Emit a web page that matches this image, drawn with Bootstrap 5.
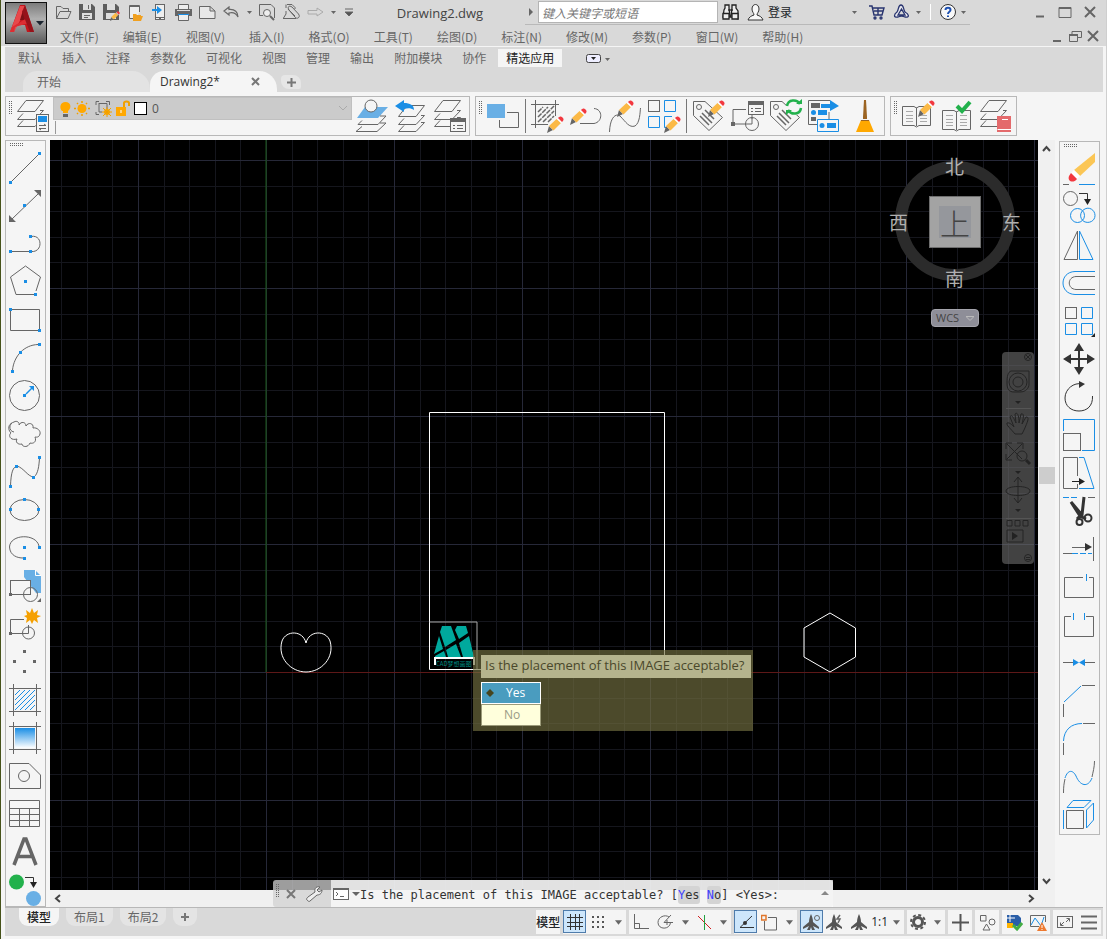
<!DOCTYPE html>
<html lang="zh-CN">
<head>
<meta charset="utf-8">
<meta name="viewport" content="width=device-width, initial-scale=1">
<title>Drawing2.dwg</title>
<link href="https://cdn.jsdelivr.net/npm/bootstrap@5.3.0/dist/css/bootstrap.min.css" rel="stylesheet">
<script src="https://cdn.jsdelivr.net/npm/bootstrap@5.3.0/dist/js/bootstrap.bundle.min.js"></script>
<style>
:root{--ink:#666;--chrome:#d9d9d9;--paper:#f5f5f5;--blue:#1a8ee5;--line:#b8b8b8}
body{font:12px/16px "Open Sans","Noto Sans CJK SC",sans-serif;background:var(--paper);color:var(--ink);border-left:1px solid #46521a;border-right:1px solid #cfcfcf}
button{border:0;background:none;padding:0;color:inherit;font:inherit}
svg{display:block;fill:none;stroke:var(--ink)}
a{color:inherit;text-decoration:none}
.zh{font-family:"Noto Sans CJK SC",sans-serif}
.b{stroke:var(--blue)} .bf{fill:var(--blue);stroke:none} .kf{fill:var(--ink);stroke:none} .lb{fill:#69afe5;stroke:none}
/* title area */
.titlebar{background:var(--chrome);height:46px}
.app-btn{width:42px;height:42px;margin:2px 0 0 4px;border:1px solid #111;background:linear-gradient(#7c7c7c,#b0b0b0 40%,#5c5c5c)}
.row-a{height:25px}.row-b{height:21px}
.qa{width:24px;height:24px}.qa-caret{width:12px;height:24px}
.qa svg,.qa-caret svg{margin:auto}
.doc-title{font-size:13px;color:#444}
.info{width:445px;height:25px;border-bottom:1px solid #b9b9b9}
.search{width:180px;height:22px;border:1px solid #b4b4b4;border-radius:0;background:#fff;font-style:italic;font-size:12px;padding:0 3px;color:#666;outline:0}
.search::placeholder{color:#777;opacity:1}
.wins{width:136px}
.win{width:25px;height:24px}.win2{width:18px;height:20px}
.menus{gap:24px;padding-left:13px;padding-top:2px}
/* ribbon */
.ribbon{background:var(--chrome);height:45px;margin:1px 3px 0 4px}
.rtabs{gap:4px;height:24px;padding-left:5px}
.rtabs a{padding:0 8px;height:18px;line-height:17px;margin-top:2px}
.rtabs a.on{background:var(--paper);color:#222}
.ftabs{height:21px}
.ftab{height:21px;border-radius:14px 18px 0 0}
.ftab-start{width:127px;margin-left:18px;background:#e3e3e3;padding-left:14px}
.ftab-doc{width:127px;background:var(--paper);color:#333;padding:0 17px 0 10px;font-size:12px}
.ftab-plus{width:20px;height:14px;background:#e6e6e6;border-radius:4px 8px 2px 8px;margin:4px 0 0 4px}
/* tool strips */
.tools-top{gap:5px;padding:4px 0 4px 4px}
.strip{border:1px solid var(--line);height:40px}
.grip-v{width:5px;height:13px;margin:4px 1px 0 2px;background:conic-gradient(#666 25%,transparent 0) 0 0/2px 2px}
.grip-h{width:14px;height:4px;margin:2px 0 2px 3px;background:conic-gradient(#666 25%,transparent 0) 0 0/2px 2px}
.tool{display:block;width:39px;height:38px;flex:none}
.split{width:1px;height:34px;margin:2px;background:#777}
.layerbox{width:299px;height:38px}
.layerrow{height:23px;background:#cbcbcb;border:1px solid #c0c0c0}
.layerrow select{appearance:none;border:0;background:none;color:#555;font-size:12px;padding:0 5px;outline:0}
.vrule{border-left:1px solid #999;height:13px;margin:1px 0 0 2px}
/* work area */
.work{min-height:0;padding-left:4px}
.side{width:41px;border:1px solid var(--line);overflow:hidden}
.side-r{align-self:flex-start;margin:1px 6px 0 4px}
.view{margin-left:4px}
.canvas{background:#000;min-height:0}
.vscroll{width:17px;background:#f0f0f0;padding:5px 0}
.thumb{width:16px;height:17px;background:#cdcdcd}
.hscroll{height:17px;background:#f0f0f0;padding:0 4px}
.cube{right:18px;top:18px;width:130px;height:130px;color:#b0b0b0;font-size:19px;line-height:20px}
.cube b{font-weight:400;position:absolute}
.cube .n{left:55px;top:-2px}.cube .s{left:55px;bottom:0}.cube .w{left:-1px;top:54px}.cube .e{right:-1px;top:54px}
.cube-face{left:39px;top:38px;width:52px;height:52px;background:#a3a3a3;border:1px solid #6e6e6e}
.cube-face span{display:block;width:32px;height:32px;margin:9px;background:#95979c;color:#444;font:300 30px/32px "Noto Sans CJK SC",sans-serif;text-align:center}
.wcs{right:59px;top:169px;width:48px;height:18px;background:#8e8e98;border:1px solid #a5a5ad;border-radius:4px;color:#444;line-height:14px;font-size:11px}
.navbox{right:4px;top:212px;width:32px;height:212px;background:rgba(110,110,110,.6);border-radius:4px}
.prompt{left:423px;top:510px;width:280px;height:81px;background:rgba(115,113,65,.66);padding:5px 2px 0 8px;color:#fff}
.prompt-q{height:23px;line-height:20px;font-size:13px;background:#b5b48d;color:#4a482b;padding-left:4px;margin-bottom:4px}
.opt{display:flex;align-items:center;width:60px;height:22px;line-height:18px;border:1px solid #fff}
.opt-y{background:#4a9cbf;color:#fff}
.opt-n{background:#ffffdc;color:#9b9b86;border-color:#9c9b7a;padding-left:22px}
.cmd{left:223px;bottom:0;width:560px;height:27px;z-index:2;border-radius:3px;background:rgba(210,210,210,.75)}
.cmd-in{background:rgba(255,255,255,.7);font:12px/30px "DejaVu Sans Mono","Liberation Mono",monospace;color:#333;padding-left:1px;white-space:pre}
.kw{background:#d4d4d4;border-radius:3px;padding:2px 0}
.kw i{font-style:normal;color:#4040ff}
/* status */
.status{border-top:1px solid var(--line);height:29px;background:var(--chrome);margin:0 3px 3px 4px}
.tabline{padding-left:14px}
.ltab{height:18px;line-height:17px;background:#e4e4e4;border-radius:0 0 9px 9px;text-align:center;margin-right:3px}
.ltab.on{background:var(--paper);color:#222;font-weight:500}
.sgroups{gap:3px;padding:2px 2px 0 0}
.sgrp{background:#f4f4f4;height:24px}
.sb{width:24px;height:24px}.sb-s{width:22px;height:24px}
.sb.act{width:23px;height:23px;background:#cde6fb;border:1px solid #4f7cab}
.sc{width:16px;height:24px}
.sb svg,.sb-s svg,.sc svg{margin:auto}
</style>
</head>
<body class="d-flex flex-column vh-100 overflow-hidden m-0">
<svg width="0" height="0" class="position-absolute" aria-hidden="true">
<symbol id="pencil" viewBox="0 0 17 17"><path d="M0 17 2 10 6 14Z" fill="#666" stroke="none"/><path d="M2 10 9.500 3 14 7 6.500 14.500Z" fill="#fbb946" stroke="none"/><path d="M10 3 11 2 15 6 14 7Z" fill="#fff" stroke="none"/><path d="M11 2C13 0 14 0 15.500 1.500S17 4 15 6Z" fill="#f2383f" stroke="none"/></symbol>
<symbol id="caret" viewBox="0 0 8 5"><path d="M0 0H8L4 5Z" fill="#666" stroke="none"/></symbol>
<symbol id="caret-s" viewBox="0 0 5 3"><path d="M0 0H5L2.500 3Z" fill="#666" stroke="none"/></symbol>
<symbol id="stack" viewBox="0 0 30 28"><path d="M9 .5H26.500L18 11.500H.5ZM23 10.500H26.500L18 19.500H.5L6 13.500M23 17.500H26.500L18 26.500H.5L6 20.500"/></symbol>
<symbol id="tag" viewBox="0 0 32 32"><path d="M1.500 1.500H13L30.500 17.500 17 30.500 1.500 15.500Z"/><circle cx="7" cy="7" r="2.500"/><path d="M13 10 22 19M10 13 20 23M8 16 17 25" stroke-width="1.500"/></symbol>
<symbol id="anno" viewBox="0 0 16 16"><path d="M8 0C9 2 10 5 10 8L16 13V15L10 12 12 16H9L8 13 7 16H4L6 12 0 15V13L6 8C6 5 7 2 8 0Z" fill="#555" stroke="none"/></symbol>
<symbol id="book" viewBox="0 0 30 24"><path d="M14.500 3.500V22M.5 2.500H12L14.500 4 17 2.500H28.500V21.500H17L14.500 23 12 21.500H.5Z"/><path d="M4 7.500H11M4 11.500H11M4 14.500H11M4 17.500H11M18 7.500H25M18 11.500H25M18 14.500H25M18 17.500H25" stroke="#aaa"/></symbol>
</svg>

<header class="titlebar d-flex">
  <button class="app-btn d-flex align-items-center" aria-label="应用程序菜单"><svg width="40" height="40" viewBox="0 0 40 40"><g stroke="none"><path d="M4 29 14 2H19L28 29H21L19 22H10L8 29Z" fill="#c3151c"/><path d="M14 3H19L17 12 8 29H4Z" fill="#e8484b"/><path d="M17 7 14 17H19Z" fill="#7d1015"/><path d="M4 29 6 24 21 15 23 20 9 24 8 29Z" fill="#dd2d32"/><path d="M19 2 28 29H24L16 9Z" fill="#96121a"/><path d="M30 18H38L34 22.500Z" fill="#1c2530"/></g></svg></button>
  <div class="flex-grow-1">
    <div class="row-a d-flex">
      <div class="d-flex ps-1" role="toolbar" aria-label="快速访问">
        <button class="qa" aria-label="打开"><svg width="17" height="15" viewBox="0 0 17 15"><path d="M1.500 13.500V1.500H6L8 3.500H13.500V6M1.500 13.500 5 6.500H16L13 13.500Z"/></svg></button>
        <button class="qa" aria-label="保存"><svg width="16" height="16" viewBox="0 0 16 16"><path d="M0 0H13L16 3V16H0Z" fill="#5d5d5d" stroke="none"/><path d="M4 0H12V6H4ZM3 9H13V15H3Z" fill="#ddd" stroke="none"/><path d="M9.500 1V5M5 11.500H11M5 13.500H9"/></svg></button>
        <button class="qa" aria-label="另存为"><svg width="17" height="17" viewBox="0 0 17 17"><path d="M0 0H13L16 3V16H0Z" fill="#5d5d5d" stroke="none"/><path d="M4 0H12V6H4ZM3 9H13V15H3Z" fill="#ddd" stroke="none"/><use href="#pencil" x="7" y="7" width="10" height="10"/></svg></button>
        <button class="qa" aria-label="从移动设备打开"><svg width="16" height="17" viewBox="0 0 16 17"><path d="M9 14.500H2.500V1.500H12.500V8" fill="#eee"/><path d="M3 2.500H12"/><path d="M6 10H9L10 11H14V12H16L14 17H6Z" fill="#f0a020" stroke="none"/></svg></button>
        <button class="qa" aria-label="保存到移动设备"><svg width="14" height="16" viewBox="0 0 14 16"><rect x="3.500" y=".5" width="9" height="15" fill="#eee"/><path d="M4 13.500H12M7 14.500H9"/><path d="M0 5H5V2L10 6 5 10V7H0Z" class="bf"/></svg></button>
        <button class="qa" aria-label="打印"><svg width="17" height="17" viewBox="0 0 17 17"><path d="M3.500 5V.5H13.500V5" fill="#eee"/><path d="M0 5H17V12H0Z" class="kf"/><path d="M2 6.500H15" stroke="#ddd"/><path d="M3.500 9.500H13.500V16.500H3.500Z" fill="#eee"/><path d="M3 10.500H14" class="b"/></svg></button>
        <button class="qa" aria-label="新建"><svg width="17" height="14" viewBox="0 0 17 14"><path d="M.5 1.500H11L16 6V13.500H.5ZM11 1.500V6H16" fill="#e8e8e8"/></svg></button>
        <button class="qa" aria-label="放弃"><svg width="17" height="13" viewBox="0 0 17 13"><path d="M6 1 1 5 6 9V7C10 6 13 7 15 11 15 6 12 3 6 3.500Z" stroke-width="1.200"/></svg></button>
        <button class="qa-caret" aria-label="放弃列表"><svg width="5" height="3"><use href="#caret-s"/></svg></button>
        <button class="qa" aria-label="打印预览"><svg width="17" height="17" viewBox="0 0 17 17"><path d="M4 11.500H.5V.5H12L15.500 4V14"/><circle cx="8" cy="9" r="3.500" fill="#eee"/><path d="M11 12 15 16" stroke-width="2"/></svg></button>
        <button class="qa" aria-label="附件"><svg width="17" height="16" viewBox="0 0 17 16"><path d="M4 .5H9L12 3.500V5M3 4V.5M0 14.500H13M3 7V10L.5 14" stroke="#666"/><path d="M5 5 12 13C14 16 18 13 15.500 10L9 3C6 1 4 3 6 6L12 12" fill="none"/></svg></button>
        <button class="qa" aria-label="重做"><svg width="17" height="13" viewBox="0 0 17 13"><path d="M10 2 16 6 10 10V8H1V4.500H10Z" stroke="#aaa"/></svg></button>
        <button class="qa-caret" aria-label="重做列表"><svg width="5" height="3"><use href="#caret-s"/></svg></button>
        <button class="qa-caret ms-1" aria-label="自定义"><svg width="8" height="8" viewBox="0 0 8 8"><path d="M0 1H8M0 4H8L4 8Z" fill="#555"/></svg></button>
      </div>
      <div class="doc-title flex-grow-1 text-center align-self-center">Drawing2.dwg</div>
      <div class="info d-flex align-items-center flex-shrink-0">
        <svg width="13" height="8" viewBox="0 0 13 8"><path d="M4 0 8 4 4 8Z" class="kf"/></svg>
        <input class="search zh" type="text" placeholder="键入关键字或短语" aria-label="搜索">
        <button class="ms-1" aria-label="查找"><svg width="17" height="16" viewBox="0 0 17 16" stroke-width="1.300"><path d="M3 4V1H7V4L8 13H1L2 6ZM14 4V1H10V4L9 13 16 15V7Z" fill="#eee" stroke="#222"/><path d="M1 9.500H7V15H1ZM10 9.500H16V15H10Z" fill="#eee" stroke="#222"/><path d="M6 6H11" stroke="#222"/></svg></button>
        <button class="d-flex align-items-center ms-2 text-dark zh"><svg class="me-1" width="17" height="17" viewBox="0 0 17 17"><path d="M5 5C5-1 12-1 12 5 12 8 10 9 10 11 13 12 15 13 16 16H1C2 13 4 12 7 11 7 9 5 8 5 5Z" fill="#f8f8f8" stroke="#333"/></svg>登录</button>
        <button class="ms-auto me-2" aria-label="登录选项"><svg width="5" height="3"><use href="#caret-s"/></svg></button>
        <button class="mx-1" aria-label="购物车"><svg width="16" height="16" viewBox="0 0 16 16" stroke-width="1.400"><path d="M0 2H3L5 11H13L15 4H4M5 7H14M9 4V11" stroke="#28346f"/><circle cx="6" cy="14" r="1" stroke="#28346f"/><circle cx="12" cy="14" r="1" stroke="#28346f"/></svg></button>
        <button class="mx-1" aria-label="应用商店"><svg width="17" height="16" viewBox="0 0 17 16" stroke-width="1.300"><path d="M8 1C11 1 10 5 12 8 16 10 17 14 12 13 10 12 7 12 5 13 0 14 1 10 4 8 6 5 5 1 8 1ZM8.500 5 5 11H12Z" stroke="#28346f" fill="#e8e8ee"/></svg></button>
        <button aria-label="应用选项"><svg width="8" height="3" viewBox="0 0 8 3"><use href="#caret-s" x="2" width="5" height="3"/></svg></button>
        <span class="vr mx-2 bg-white opacity-100 my-1"></span>
        <button aria-label="帮助"><svg width="18" height="18" viewBox="0 0 18 18"><circle cx="9" cy="9" r="7.500" fill="#f8f8f8" stroke="#333"/><path d="M6.500 7C6.500 4 11.500 4 11.500 7 11.500 9 9 8.500 9 11M9 12.500V14" stroke="#1c4fb0" stroke-width="2"/></svg></button>
        <button class="ms-1 me-1" aria-label="帮助选项"><svg width="5" height="3"><use href="#caret-s"/></svg></button>
      </div>
      <div class="wins d-flex flex-shrink-0 justify-content-end pe-1">
        <button class="win" aria-label="最小化"><svg width="25" height="24"><path d="M9 16.500H17" stroke-width="2"/></svg></button>
        <button class="win" aria-label="最大化"><svg width="25" height="24"><path d="M7 7.500H19V17.500H7Z"/><path d="M7 8H19" stroke-width="2"/></svg></button>
        <button class="win" aria-label="关闭"><svg width="25" height="24"><path d="M8 7 18 17M18 7 8 17" stroke-width="2"/></svg></button>
      </div>
    </div>
    <div class="row-b d-flex">
      <nav class="menus zh d-flex align-items-center flex-grow-1 text-nowrap"><a href="#">文件(F)</a><a href="#">编辑(E)</a><a href="#">视图(V)</a><a href="#">插入(I)</a><a href="#">格式(O)</a><a href="#">工具(T)</a><a href="#">绘图(D)</a><a href="#">标注(N)</a><a href="#">修改(M)</a><a href="#">参数(P)</a><a href="#">窗口(W)</a><a href="#">帮助(H)</a></nav>
      <button class="win2" aria-label="最小化图形"><svg width="18" height="20"><path d="M5 16H13" stroke-width="2"/></svg></button>
      <button class="win2" aria-label="还原图形"><svg width="18" height="20"><path d="M6 9V6.500H15.500V12.500H12M3.500 9.500H11.500V16.500H3.500Z"/><path d="M3 10H12" stroke-width="2"/></svg></button>
      <button class="win2 me-1" aria-label="关闭图形"><svg width="18" height="20"><path d="M4 6 14 16M14 6 4 16" stroke-width="2"/></svg></button>
    </div>
  </div>
</header>

<div class="ribbon">
  <nav class="rtabs d-flex zh text-nowrap"><a href="#">默认</a><a href="#">插入</a><a href="#">注释</a><a href="#">参数化</a><a href="#">可视化</a><a href="#">视图</a><a href="#">管理</a><a href="#">输出</a><a href="#">附加模块</a><a href="#">协作</a><a href="#" class="on">精选应用</a>
    <button class="ms-3 px-1 d-flex align-items-center" aria-label="最小化功能区"><svg width="26" height="10" viewBox="0 0 26 10"><rect x=".5" y=".5" width="14" height="8" rx="2" fill="#eef" stroke="#444"/><path d="M5 3H10L7.500 6Z" fill="#222" stroke="none"/><path d="M19 4H24L21.500 7Z" class="kf"/></svg></button></nav>
  <div class="ftabs d-flex">
    <a href="#" class="ftab ftab-start d-flex align-items-center zh">开始</a>
    <div class="ftab ftab-doc d-flex align-items-center justify-content-between"><span>Drawing2*</span><button aria-label="关闭 Drawing2"><svg width="9" height="9"><path d="M1 1 8 8M8 1 1 8" stroke="#777" stroke-width="2"/></svg></button></div>
    <button class="ftab-plus d-flex align-items-center justify-content-center" aria-label="新图形"><svg width="9" height="9"><path d="M0 4.500H9M4.500 0V9" stroke="#777" stroke-width="2"/></svg></button>
  </div>
</div>

<div class="tools-top d-flex">
  <div class="strip d-flex" role="toolbar" aria-label="图层">
    <span class="grip-v"></span>
    <button class="tool" aria-label="图层特性"><svg width="39" height="38"><use href="#stack" x="3" y="3" width="30" height="28"/><rect x="22.500" y="17.500" width="12" height="17" fill="#f5f5f5"/><path d="M24 19H33V25H24Z" class="bf"/><path d="M25 28.500H32M25 31.500H32M30 27 32 28.500M27 33 25 31.500"/></svg></button>
    <div class="layerbox">
      <div class="layerrow d-flex align-items-center">
        <svg class="ms-1" width="89" height="20" viewBox="0 0 89 20"><g fill="#ffa800" stroke="none"><path d="M4 12C1 9 2 3 7.500 3S14 9 10 12V14H5V12Z"/><circle cx="24" cy="9.500" r="4.500"/></g><path d="M5 16.500H10" stroke-width="3"/><path d="M24 2V4M24 15V17M16 9.500H18M30 9.500H32M19 4 20 5M28 14 29 15M29 4 28 5M20 14 19 15" stroke="#f0a000" stroke-width="1.500"/><path d="M38 6V2.500H41M48 2.500H51.500V6M38 13V15.500H41M41 4.500H49V12M41 4V13H44"/><circle cx="49" cy="13" r="3" fill="#ffa800" stroke="none"/><path d="M49 8V18M44 13H54M45 9 53 17M53 9 45 17" stroke="#f0a000"/><path d="M58 8H68V17H58Z" fill="#ffa800" stroke="none"/><path d="M66 8V4C66 2 71 2 71 4V7" stroke="#f0a000" stroke-width="2"/><path d="M63 11V14" stroke="#fff"/><rect x="76.500" y="3.500" width="12" height="12" fill="#fff" stroke="#000"/></svg>
        <select class="flex-grow-1" aria-label="当前图层"><option>0</option></select>
        <svg class="me-1" width="8" height="5"><path d="M0 0 4 4 8 0" stroke="#aaa"/></svg>
      </div>
      <div class="vrule"></div>
    </div>
    <button class="tool" aria-label="置为当前"><svg width="39" height="38"><path d="M5 21 13 10H36L26 21Z" class="lb"/><circle cx="19" cy="9" r="6" fill="#f5f5f5"/><path d="M6 27.500H26L34 19H28M4 34.500H25L34 26H28M6 27.500 10 23.500M4 34.500 10 29.500"/></svg></button>
    <button class="tool" aria-label="上一个图层"><svg width="39" height="38"><use href="#stack" x="7" y="8" width="30" height="28"/><path d="M4 9 13 3V6C19 6 23 8 23 13 20 11 17 11 13 12V15Z" class="bf"/></svg></button>
    <button class="tool" aria-label="图层状态"><svg width="39" height="38"><use href="#stack" x="4" y="3" width="30" height="28"/><rect x="20.500" y="21.500" width="15" height="13" fill="#f5f5f5"/><path d="M20 21H36V25H20Z" class="kf"/><path d="M23 28.500H25M23 31.500H25M27 28.500H33M27 31.500H33"/></svg></button>
  </div>
  <div class="strip d-flex" role="toolbar" aria-label="编辑对象">
    <span class="grip-v"></span>
    <button class="tool" aria-label="绘图次序"><svg width="39" height="38"><path d="M3 7H21V21H3Z" class="lb"/><path d="M23 15.500H34.500V30.500H15.500V23"/></svg></button><span class="split"></span>
    <button class="tool" aria-label="编辑图案填充"><svg width="39" height="38"><path d="M3 7.500H31M7.500 3V31M27.500 3V19M3 27.500H20"/><path d="M10 25 26 9M10 20 20 10M10 15 15 10M15 25 26 14M20 25 26 19" stroke-width="1.500" stroke-dasharray="5 1"/><use href="#pencil" x="19" y="19" width="17" height="17"/></svg></button>
    <button class="tool" aria-label="编辑多段线"><svg width="39" height="38"><path d="M13 26.500H27C36 25 36 12 27 11.500"/><use href="#pencil" x="3" y="11" width="17" height="17"/></svg></button>
    <button class="tool" aria-label="编辑样条曲线"><svg width="39" height="38"><path d="M3.500 35C4 20 10 16 14 19 20 25 23 31 29 29 34 26 34 15 34.500 11"/><use href="#pencil" x="11" y="3" width="17" height="17"/></svg></button>
    <button class="tool" aria-label="编辑阵列"><svg width="39" height="38"><rect x="3.500" y="3.500" width="11" height="11"/><path d="M19.500 3.500H30.500V14.500H19.500ZM3.500 19.500H14.500V30.500H3.500ZM27 19.500H19.500V30.500H22" class="b"/><use href="#pencil" x="19" y="19" width="17" height="17"/></svg></button><span class="split"></span>
    <button class="tool" aria-label="编辑属性"><svg width="39" height="38"><use href="#tag" x="3" y="3" width="32" height="32"/><use href="#pencil" x="19" y="3" width="17" height="17"/></svg></button>
    <button class="tool" aria-label="块属性"><svg width="39" height="38"><path d="M18 12.500H5V27H18M24 18V22"/><path d="M3 25H7V29H3Z" class="kf"/><circle cx="24" cy="27" r="6.500"/><path d="M24 20V27H18"/><rect x="20.500" y="4.500" width="15" height="13" fill="#f5f5f5"/><path d="M20 4H36V8H20Z" class="kf"/><path d="M23 11.500H25M23 14.500H25M27 11.500H33M27 14.500H33"/></svg></button>
    <button class="tool" aria-label="同步属性"><svg width="39" height="38"><use href="#tag" x="2" y="3" width="32" height="32"/><circle cx="27" cy="10" r="8" fill="#f5f5f5" stroke="none"/><path d="M20 9C21 2 30 2 33 7M34 11C33 18 24 18 21 13" stroke="#22b14c" stroke-width="2.500"/><path d="M29 7H35V2ZM25 13H19V18Z" fill="#22b14c" stroke="none"/></svg></button>
    <button class="tool" aria-label="属性提取"><svg width="39" height="38"><path d="M24 3.500H2.500V27.500H11M23 15V22"/><path d="M5 6H14V11H5ZM5 20H10V24H5Z" class="kf"/><path d="M15 7H24V3L33 9 24 14V11H15ZM12 13H21V18H12Z" class="bf"/><circle cx="7.500" cy="15.500" r="2.500" class="bf"/><path d="M11.500 22.500H32.500V34.500H11.500Z" class="b"/><circle cx="16" cy="28.500" r="2.500" class="bf"/><path d="M21 26H30V31H21Z" class="bf"/></svg></button>
    <button class="tool" aria-label="清理"><svg width="39" height="38"><path d="M19 3H21L22 20V22H18V20Z" fill="#9c6422" stroke="none"/><path d="M16 23H24L29 35H11Z" fill="#ffa800" stroke="none"/><path d="M16 23.500H24" stroke="#9c6422"/></svg></button>
  </div>
  <div class="strip d-flex" role="toolbar" aria-label="参照编辑">
    <span class="grip-v"></span>
    <button class="tool" aria-label="编辑参照"><svg width="39" height="38"><use href="#book" x="3" y="7" width="30" height="24"/><use href="#pencil" x="19" y="3" width="17" height="17"/></svg></button>
    <button class="tool" aria-label="保存参照"><svg width="39" height="38"><use href="#book" x="4" y="11" width="30" height="24"/><path d="M19 9 24 14 32 5" stroke="#22b14c" stroke-width="4"/></svg></button>
    <button class="tool" aria-label="标准库"><svg width="39" height="38"><use href="#stack" x="3" y="3" width="30" height="28"/><path d="M20 19H34V35H20Z" fill="#e46a6c" stroke="none"/><path d="M20.500 32.500H34" stroke="#fff"/><path d="M25 22.500H31" stroke="#fff"/></svg></button>
  </div>
</div>

<main class="work d-flex flex-grow-1">
  <div class="side flex-shrink-0" role="toolbar" aria-label="绘图">
    <div class="grip-h"></div>
    <button class="tool" aria-label="直线"><svg width="39" height="38"><path d="M5 33 33 5"/><path d="M3 32H6V35H3ZM32 3H35V6H32Z" class="bf"/></svg></button>
    <button class="tool" aria-label="构造线"><svg width="39" height="38"><path d="M6 32 32 7"/><path d="M3 35V28L10 35ZM35 3V10L28 3Z" class="kf"/><path d="M17 17H20V20H17Z" class="bf"/></svg></button>
    <button class="tool" aria-label="多段线"><svg width="39" height="38"><path d="M6 26.500H23M25 11.500C37 9 37 28 25 26.500"/><path d="M3 25H6V28H3ZM23 25H26V28H23ZM23 10H26V13H23Z" class="bf"/></svg></button>
    <button class="tool" aria-label="多边形"><svg width="39" height="38"><path d="M29 31.500H10L4.500 14 19.500 3 34.500 14 30 28"/><path d="M18 17H21V20H18ZM28 30H31V33H28Z" class="bf"/></svg></button>
    <button class="tool" aria-label="矩形"><svg width="39" height="38"><path d="M5 8.500H33.500V28M32 29.500H4.500V10"/><path d="M3 7H6V10H3ZM32 28H35V31H32Z" class="bf"/></svg></button>
    <button class="tool" aria-label="圆弧"><svg width="39" height="38"><path d="M6.500 31C8 17 18 6 32 5.500"/><path d="M5 31H8V34H5ZM13 12H16V15H13ZM32 4H35V7H32Z" class="bf"/></svg></button>
    <button class="tool" aria-label="圆"><svg width="39" height="38"><circle cx="18.500" cy="18.500" r="15"/><path d="M20 17 27 10" class="b" stroke-width="1.500"/><path d="M17 17H20V20H17ZM23 9H28V14Z" class="bf"/></svg></button>
    <button class="tool" aria-label="修订云线"><svg width="39" height="38"><path d="M8 17C2 16 3 8 8 7 11 5 14 8 13 10 15 6 20 7 20 11 22 7 28 8 27 13 31 12 35 16 34 19 33 23 30 22 29 22 31 27 27 29 24 28 22 33 16 32 16 29 12 30 9 27 11 24 4 26 2 20 5 18 1 14 3 9 6 8"/></svg></button>
    <button class="tool" aria-label="样条曲线"><svg width="39" height="38"><path d="M4.500 33C5 19 7 14 11 13 18 15 22 24 28 24 32 21 33 13 33.500 5"/><path d="M3 32H6V35H3ZM9 12H12V15H9ZM26 23H29V26H26ZM32 3H35V6H32Z" class="bf"/></svg></button>
    <button class="tool" aria-label="椭圆"><svg width="39" height="38"><ellipse cx="18.500" cy="19" rx="14.500" ry="10.500"/><path d="M3 17H6V20H3ZM31 17H34V20H31ZM17 7H20V10H17Z" class="bf"/></svg></button>
    <button class="tool" aria-label="椭圆弧"><svg width="39" height="38"><path d="M33 17C30 4 4 5 3.500 18 4 27 12 29 17 29"/><path d="M17 17H20V20H17ZM32 17H35V20H32ZM17 28H20V31H17Z" class="bf"/></svg></button>
    <button class="tool" aria-label="插入块"><svg width="39" height="38"><path d="M18 3H29L35 9V26H30L18 10Z" class="lb"/><path d="M29.500 3V8.500H35" stroke="#fff"/><rect x="4.500" y="13.500" width="20" height="14" fill="#f5f5f5"/><circle cx="24.500" cy="27.500" r="7"/><path d="M3 26H6V29H3ZM35 31V35H31Z" class="kf"/></svg></button>
    <button class="tool" aria-label="创建块"><svg width="39" height="38"><path d="M18 14.500H4.500V28.500H22.500V20"/><circle cx="22.500" cy="28" r="6"/><path d="M3 27H6V30H3Z" class="kf"/><path d="M26 3 28 8 32 5 31 10 35 11 31 13 32 18 28 15 26 19 24 15 20 18 21 13 18 11 21 10 20 5 24 8Z" fill="#f5a000" stroke="none"/></svg></button>
    <button class="tool" aria-label="多点"><svg width="39" height="38"><path d="M17 7H20V10H17ZM7 17H10V20H7ZM27 17H30V20H27ZM17 27H20V30H17Z" class="kf"/></svg></button>
    <button class="tool" aria-label="图案填充"><svg width="39" height="38"><path d="M3 7.500H35M3 30.500H35M7.500 3V35M30.500 3V35"/><path d="M9 14 14 9M9 19 19 9M9 24 24 9M9 29 29 9M14 29 29 14M19 29 29 19M24 29 29 24" class="b"/></svg></button>
    <button class="tool" aria-label="渐变色"><svg width="39" height="38"><defs><linearGradient id="gr" x2="0" y2="1"><stop stop-color="#1a8ee5"/><stop offset="1" stop-color="#fff"/></linearGradient></defs><path d="M9 9H29V29H9Z" fill="url(#gr)" stroke="none"/><path d="M3 7.500H35M3 30.500H35M7.500 3V35M30.500 3V35"/></svg></button>
    <button class="tool" aria-label="面域"><svg width="39" height="38"><path d="M3.500 6.500H23L34.500 18V31.500H3.500Z"/><circle cx="18" cy="19" r="5.500"/></svg></button>
    <button class="tool" aria-label="表格"><svg width="39" height="38"><path d="M3.500 5.500H33.500V31.500H3.500ZM3 13.500H34M3 19.500H34M3 25.500H34M13.500 13V31M23.500 13V31"/></svg></button>
    <button class="tool" aria-label="多行文字"><svg width="39" height="38"><path d="M8 32 18 6H20L30 32M12 23.500H26" stroke-width="3.500"/></svg></button>
    <button class="tool" aria-label="添加选定对象"><svg width="39" height="38"><circle cx="10.500" cy="11" r="7.500" fill="#22b14c" stroke="none"/><circle cx="27.500" cy="27.500" r="7.500" class="lb"/><path d="M19 6.500H27.500V12" stroke="#333"/><path d="M24 11H31L27.500 17Z" fill="#222" stroke="none"/></svg></button>
  </div>

  <div class="view flex-grow-1 d-flex flex-column position-relative">
    <div class="d-flex flex-grow-1 canvas">
      <div class="flex-grow-1 position-relative overflow-hidden canvas">
        <svg class="w-100 h-100 position-absolute" role="img" aria-label="绘图区">
          <defs><pattern id="grid" x="88" y="20" width="128" height="128" patternUnits="userSpaceOnUse"><path d="M26.500 0V128M51.500 0V128M77.500 0V128M102.500 0V128M0 26.500H128M0 51.500H128M0 77.500H128M0 102.500H128" stroke="#15161d"/><path d="M.5 0V128M0 .5H128" stroke="#262838"/></pattern></defs>
          <rect width="100%" height="100%" fill="url(#grid)" stroke="none"/>
          <path d="M216 0V532" stroke="#1a5a1a"/><path d="M216 532.500H2000" stroke="#5e1818"/>
          <g stroke="#fff"><path d="M379.500 272.500H614.500V529.500H379.500Z"/>
          <path d="M379.500 482H427V529" stroke="#aaa"/>
          <path d="M256 503C253 490 236 490 232 501 227 518 241 532 256 532 271 532 285 518 280 501 276 490 259 490 256 503Z"/>
          <path d="M780 473 805.500 488V517L780 532 754 517V488Z"/></g>
          <path d="M389 496 393 509 384 514ZM392 486H401L406 500 395 507 390 492ZM407 486H416L418 493 409 499 405 490ZM409 503 419 496 424 517H413ZM396 510 406 504 411 517H398ZM394 511 396 517H385V516Z" fill="#00a99d" stroke="none"/>
          <text x="386" y="526" font-size="6" fill="#008c83" stroke="none" font-family="Noto Sans CJK SC">CAD梦想画图</text>
          <path d="M384 518H425M385 517V525M424 517V525" stroke="#fff" stroke-width="2"/>
        </svg>

        <div class="cube position-absolute zh">
          <svg width="130" height="130"><circle cx="65" cy="63" r="54" stroke="#2b2b2b" stroke-width="12"/></svg>
          <b class="n">北</b><b class="s">南</b><b class="w">西</b><b class="e">东</b>
          <div class="cube-face position-absolute"><span>上</span></div>
        </div>
        <button class="wcs position-absolute d-flex align-items-center justify-content-between px-1">WCS<svg width="8" height="5"><path d="M0 .5H8L4 4.500Z" stroke="#bbb"/></svg></button>
        <div class="navbox position-absolute" role="toolbar" aria-label="导航栏"><svg width="32" height="212"><g stroke="#242424"><circle cx="26" cy="5" r="3.500"/><path d="M24 3 28 7M28 3 24 7"/><path d="M9 19H27V32C27 36 24 40 18 40H12C7 40 5 37 5 31 5 24 6 20 9 19Z"/><circle cx="16" cy="30" r="9"/><circle cx="16" cy="30" r="5"/><path d="M4 56.500H29M4 166.500H29" stroke="#555"/><path d="M13 82C9 77 4 73 5 71 8 70 11 74 12 75L8 65C9 62 11 64 14 71L13 62C15 60 17 62 17 71L19 62C22 61 22 64 20 72L24 65C27 65 27 67 22 78L20 82Z"/><path d="M5 92 20 107M20 92 5 107M4 97V91H10M15 91H21V97M4 102V108H10"/><circle cx="20" cy="104" r="5"/><path d="M24 108 28 112" stroke-width="3"/><path d="M16 126V150M12 130 16 125 20 130M12 146 16 151 20 146M4 139C4 133 28 133 28 139S4 145 4 139M5 168.500H10V174H5ZM13 168.500H18V174H13ZM21 168.500H26V174H21ZM5 178H21V190H5Z"/><circle cx="26" cy="206" r="3.500"/><path d="M24 205.500H28M24 207.500H28"/></g><path d="M13 49H19L16 52ZM13 119H19L16 122ZM13 157H19L16 160ZM10 180 16 184 10 188Z" fill="#222" stroke="none"/></svg></div>

        <div class="prompt position-absolute" role="dialog" aria-label="确认">
          <div class="prompt-q">Is the placement of this IMAGE acceptable?</div>
          <button class="opt opt-y"><svg class="ms-1" width="8" height="8"><path d="M4 0 8 4 4 8 0 4Z" fill="#46451f" stroke="none"/></svg><span class="ps-2 ms-1">Yes</span></button>
          <button class="opt opt-n">No</button>
        </div>
      </div>
      <div class="vscroll d-flex flex-column justify-content-between align-items-center flex-shrink-0">
        <svg width="9" height="7"><path d="M1 6 4.500 2 8 6" stroke="#444" stroke-width="2"/></svg>
        <span class="thumb" style="margin-bottom:80px"></span>
        <svg width="9" height="7"><path d="M1 1 4.500 5 8 1" stroke="#444" stroke-width="2"/></svg>
      </div>
    </div>
    <div class="hscroll d-flex justify-content-between align-items-center flex-shrink-0">
      <svg width="7" height="9"><path d="M6 1 2 4.500 6 8" stroke="#444" stroke-width="2"/></svg>
      <svg class="me-3" width="7" height="9"><path d="M1 1 5 4.500 1 8" stroke="#444" stroke-width="2"/></svg>
    </div>
    <div class="cmd position-absolute d-flex">
      <span class="grip-v"></span>
      <button class="ms-1" aria-label="关闭命令行"><svg width="12" height="20"><path d="M2 6 10 14M10 6 2 14" stroke="#777" stroke-width="2"/></svg></button>
      <button class="ms-2 me-2" aria-label="自定义命令行"><svg width="18" height="20"><path d="M2 16C1 15 2 14 3 13L10 8C9 4 12 2 15 3L12 6 14 8 17 6C17 10 14 11 12 11L5 17C4 18 3 17 2 16Z" fill="#eee"/></svg></button>
      <div class="cmd-in d-flex flex-grow-1"><svg class="flex-shrink-0" width="28" height="26"><rect x="1.500" y="8.500" width="15" height="11" fill="#fff"/><path d="M1 9H17" stroke-width="2"/><path d="M4 12 6 14 4 16M8 16.500H12"/><path d="M20 12H28L24 16Z" class="kf"/></svg><span>Is the placement of this IMAGE acceptable? [<span class="kw"><i>Y</i>es</span> <span class="kw"><i>N</i>o</span>] &lt;Yes&gt;:</span><svg class="ms-auto me-1" width="8" height="26"><path d="M0 15H8L4 11Z" fill="#888" stroke="none"/></svg></div>
    </div>
  </div>

  <div class="side side-r flex-shrink-0" role="toolbar" aria-label="修改">
    <div class="grip-h"></div>
    <button class="tool" aria-label="删除"><svg width="39" height="38"><path d="M35 3V12L20 26 14 20Z" fill="#fbc655" stroke="none"/><path d="M14 20 20 26 17 29 11 23Z" fill="#fff" stroke="none"/><path d="M11 23 17 29C13 34 7 31 9 26Z" fill="#f2383f" stroke="none"/><path d="M3 34.500H9"/><path d="M19 34.500H35" class="b"/></svg></button>
    <button class="tool" aria-label="复制"><svg width="39" height="38"><circle cx="10.500" cy="10.500" r="7"/><circle cx="17.500" cy="27.500" r="7" class="b"/><path d="M24 21.500C29 18 35 22 35 27.500S29 36 24 33.500C19 30 20 24 24 21.500" class="b"/><path d="M19 5.500H27.500V12" stroke="#333"/><path d="M24 11H31L27.500 17Z" fill="#222" stroke="none"/></svg></button>
    <button class="tool" aria-label="镜像"><svg width="39" height="38"><path d="M17.500 5V33.500H4Z"/><path d="M19.500 5V33.500H33Z" class="b"/></svg></button>
    <button class="tool" aria-label="偏移"><svg width="39" height="38"><path d="M35 7.500H15C-1 8-1 30 15 30.500H35" class="b"/><path d="M35 12.500H16C7 13 7 25 16 25.500H35"/></svg></button>
    <button class="tool" aria-label="阵列"><svg width="39" height="38"><rect x="5.500" y="5.500" width="11" height="11"/><path d="M21.500 5.500H32.500V16.500H21.500ZM5.500 21.500H16.500V32.500H5.500ZM21.500 21.500H32.500V32.500H21.500Z" class="b"/><path d="M35 31V35H31Z" fill="#222" stroke="none"/></svg></button>
    <button class="tool" aria-label="移动"><svg width="39" height="38"><path d="M19 8V30M8 19H30" stroke="#333" stroke-width="2"/><path d="M14 11 19 3 24 11ZM14 27 19 35 24 27ZM11 14 3 19 11 24ZM27 14 35 19 27 24Z" fill="#333" stroke="none"/></svg></button>
    <button class="tool" aria-label="旋转"><svg width="39" height="38"><path d="M22 6C14 4 5 11 5 20 5 28 11 33 19 33S33 28 32.500 18" stroke="#333"/><path d="M19 3 25 6 19 10Z" fill="#333" stroke="none"/></svg></button>
    <button class="tool" aria-label="缩放"><svg width="39" height="38"><path d="M3.500 15V3.500H34.500V34.500H22" class="b"/><rect x="3.500" y="17.500" width="17" height="17"/></svg></button>
    <button class="tool" aria-label="拉伸"><svg width="39" height="38"><path d="M17.500 22V3.500H3.500V34.500H17.500V30"/><path d="M19 3.500H24L34 34.500H19" class="b"/><path d="M12 27.500H21" stroke="#222"/><path d="M19 24 25 27.500 19 31Z" fill="#222" stroke="none"/></svg></button>
    <button class="tool" aria-label="修剪"><svg width="39" height="38"><path d="M3 5.500H17" class="b" stroke-dasharray="6 2"/><path d="M28 5.500H35"/><path d="M24 5 22 23 11 10 20 24 17 27M20 24 26 27" stroke="#333" stroke-width="3"/><circle cx="19.500" cy="30" r="3" stroke="#333" stroke-width="2"/><circle cx="28" cy="26" r="3.500" stroke="#333" stroke-width="2"/></svg></button>
    <button class="tool" aria-label="延伸"><svg width="39" height="38"><path d="M33.500 7V31M3 23.500H12M12 17.500H27"/><path d="M12 23.500H32" class="b" stroke-dasharray="6 2"/><path d="M25 13 32 17 25 21Z" fill="#333" stroke="none"/></svg></button>
    <button class="tool" aria-label="打断于点"><svg width="39" height="38"><path d="M23 9.500H4.500V29.500H33.500V9.500H29"/><path d="M26.500 6V13" class="b"/></svg></button>
    <button class="tool" aria-label="打断"><svg width="39" height="38"><path d="M11 10.500H4.500V30.500H33.500V10.500H26"/><path d="M13.500 7V14M24.500 7V14" class="b"/></svg></button>
    <button class="tool" aria-label="合并"><svg width="39" height="38"><path d="M3 18.500H13M25 18.500H35"/><path d="M13 15 19 18.500 13 22ZM25 15 19 18.500 25 22Z" class="bf"/></svg></button>
    <button class="tool" aria-label="倒角"><svg width="39" height="38"><path d="M22 3.500H35M3.500 22V35"/><path d="M4 20 21 4" class="b"/></svg></button>
    <button class="tool" aria-label="圆角"><svg width="39" height="38"><path d="M23 3.500H35M3.500 23V35"/><path d="M3.500 21C4 10 11 3.500 22 3.500" class="b"/></svg></button>
    <button class="tool" aria-label="光顺曲线"><svg width="39" height="38"><path d="M3.500 35C3.500 29 4 25 5 21M32 19C33 14 34.500 9 34.500 3"/><path d="M5 20C8 11 13 12 16 18 20 28 28 30 32 20" class="b"/></svg></button>
    <button class="tool" aria-label="分解"><svg width="39" height="38"><path d="M6.500 14.500H23.500V32.500H6.500Z"/><path d="M3.500 14V33M7 11.500 13 4.500H31L24 11.500ZM26.500 14 33.500 7V24L26.500 32Z" class="b"/></svg></button>
  </div>
</main>

<footer class="status d-flex justify-content-between flex-shrink-0">
  <nav class="tabline d-flex zh"><a href="#" class="ltab on px-2">模型</a><a href="#" class="ltab px-2 ms-1">布局1</a><a href="#" class="ltab px-2 ms-1">布局2</a><button class="ltab px-2 ms-1" aria-label="新布局"><svg width="8" height="16"><path d="M0 8H8M4 4V12" stroke="#777" stroke-width="2"/></svg></button></nav>
  <div class="sgroups d-flex" role="toolbar" aria-label="状态栏">
    <div class="sgrp zh"><button class="sb text-nowrap text-dark fw-medium">模型</button></div>
    <div class="sgrp d-flex"><button class="sb act" aria-label="栅格"><svg width="16" height="16"><path d="M3.500 0V16M8.500 0V16M12.500 0V16M0 3.500H16M0 8.500H16M0 12.500H16" stroke="#333"/></svg></button><button class="sb" aria-label="捕捉"><svg width="14" height="14"><path d="M1 2H14M1 7H14M1 12H14" stroke="#555" stroke-width="2" stroke-dasharray="2 3"/></svg></button><button class="sc" aria-label="捕捉选项"><svg width="7" height="5"><use href="#caret"/></svg></button></div>
    <div class="sgrp d-flex"><button class="sb" aria-label="正交"><svg width="16" height="16"><path d="M1.500 0V14.500H16M2 9.500H6.500V14"/></svg></button><button class="sb" aria-label="极轴"><svg width="16" height="16"><path d="M12 3C8 0 1 3 1 8.500 1 16 13 16 13.500 8.500M16 8.500H7L14 1M10 6V11"/></svg></button><button class="sc" aria-label="极轴选项"><svg width="7" height="5"><use href="#caret"/></svg></button><button class="sb-s" aria-label="等轴测"><svg width="15" height="15"><path d="M1 1 14 14" stroke="#d02020"/><path d="M7.500 0V15" stroke="#22a040"/></svg></button><button class="sc" aria-label="等轴测选项"><svg width="7" height="5"><use href="#caret"/></svg></button></div>
    <div class="sgrp d-flex"><button class="sb act" aria-label="对象捕捉追踪"><svg width="16" height="14"><path d="M14 1 2 12.500H16" stroke="#333"/><circle cx="7" cy="8" r="2" fill="#333" stroke="none"/></svg></button><button class="sb" aria-label="对象捕捉"><svg width="17" height="17"><path d="M7 3.500H15.500V16H3.500V7"/><path d="M.5 1.500H5V6H.5Z" stroke="#e0762b" stroke-width="1.500"/></svg></button><button class="sc" aria-label="捕捉设置"><svg width="7" height="5"><use href="#caret"/></svg></button></div>
    <div class="sgrp d-flex"><button class="sb act" aria-label="注释可见性"><svg width="18" height="16"><use href="#anno" width="16" height="16"/><circle cx="14" cy="4" r="2.500"/></svg></button><button class="sb" aria-label="自动缩放"><svg width="18" height="16"><use href="#anno" width="16" height="16"/><path d="M14 1 11 5H14L12 9" stroke-width="1.500"/></svg></button><button class="sb" aria-label="注释比例"><svg width="16" height="16"><use href="#anno" width="16" height="16"/></svg></button><button class="text-dark">1:1</button><button class="sc" aria-label="比例列表"><svg width="7" height="5"><use href="#caret"/></svg></button></div>
    <div class="sgrp d-flex"><button class="sb-s" aria-label="切换工作空间"><svg width="16" height="16"><circle cx="8" cy="8" r="4.500" stroke="#555" stroke-width="3"/><circle cx="8" cy="8" r="7" stroke="#555" stroke-width="2" stroke-dasharray="3 2.500"/></svg></button><button class="sc" aria-label="工作空间选项"><svg width="7" height="5"><use href="#caret"/></svg></button></div>
    <div class="sgrp"><button class="sb" aria-label="注释监视器"><svg width="17" height="17"><path d="M8.500 0V17M0 8.500H17" stroke="#555" stroke-width="2"/></svg></button></div>
    <div class="sgrp"><button class="sb" aria-label="隔离对象"><svg width="17" height="17"><path d="M1.500 1.500H7V7H1.500ZM7.500 10 11 16H4Z"/><circle cx="13" cy="8" r="3"/></svg></button></div>
    <div class="sgrp d-flex"><button class="sb" aria-label="图形性能"><svg width="17" height="17"><path d="M1 1H12L15 4V12H1Z" fill="#2b5fa8" stroke="none"/><path d="M1 9H7V14H1Z" fill="#ffb400" stroke="none"/><path d="M0 4H9M4 0V8" stroke="#fff"/><path d="M7 11 11 15 16 9" stroke="#44ad45" stroke-width="3"/></svg></button><button class="sb" aria-label="性能警告"><svg width="17" height="17"><path d="M9 12.500H.5V1.500H15.500V8"/><path d="M1 11 5 4 11 12 14 3" class="b"/><path d="M12 8 17 17H7Z" fill="#ee7a30" stroke="none"/><path d="M12 11V14M12 15V16" stroke="#fff"/></svg></button></div>
    <div class="sgrp d-flex"><button class="sb" aria-label="全屏显示"><svg width="17" height="13"><rect x=".5" y=".5" width="15" height="11"/><path d="M4 9 7 6M9 6 12 3M3.500 6.500V9.500H6.500M9.500 2.500H12.500V5.500"/></svg></button><button class="sb" aria-label="自定义"><svg width="17" height="15"><path d="M0 1.500H16M0 7.500H16M0 13.500H16" stroke-width="2"/></svg></button></div>
  </div>
</footer>
</body>
</html>
